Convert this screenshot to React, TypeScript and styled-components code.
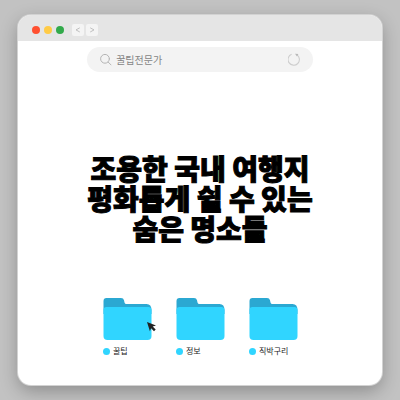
import React from "react";
import styled, { createGlobalStyle } from "styled-components";

const GlobalStyle = createGlobalStyle`
  * {
    box-sizing: border-box;
  }

  body {
    margin: 0;
    background: #c2c2c2;
    font-family: "Noto Sans CJK KR", sans-serif;
  }

  button {
    padding: 0;
    border: 0;
    background: none;
    font-family: inherit;
    cursor: pointer;
  }
`;

const Page = styled.div`
  display: flex;
  min-height: 100vh;
  padding: 15px 18px;
`;

const Window = styled.main`
  display: flex;
  flex: 1;
  flex-direction: column;
  min-width: 0;
  border-radius: 13px;
  background: #fff;
  box-shadow: 0 0 0 1px #d2d2d2, 0 6px 18px rgba(0, 0, 0, 0.28);
`;

const TitleBar = styled.header`
  display: flex;
  align-items: center;
  height: 26px;
  padding: 4px 14px 0;
  border-radius: 13px 13px 0 0;
  background: #e5e5e5;
`;

const Lights = styled.div`
  display: flex;
  gap: 4px;
  margin-right: 8px;
`;

const Light = styled.button<{ $color: string }>`
  width: 8px;
  height: 8px;
  border-radius: 50%;
  && {
    background: ${({ $color }) => $color};
  }
`;

const Navigation = styled.nav`
  display: flex;
  gap: 2px;
`;

const NavButton = styled.button`
  display: grid;
  place-items: center;
  width: 12px;
  height: 12px;
  border-radius: 2px;
  && {
    background: #f4f4f4;
  }
`;

const SearchBar = styled.form`
  display: flex;
  align-items: center;
  align-self: center;
  gap: 4px;
  width: 62%;
  height: 25px;
  margin-top: 6px;
  padding: 0 12px;
  border-radius: 13px;
  background: #f3f3f3;
`;

const SearchInput = styled.input`
  flex: 1;
  min-width: 0;
  height: 16px;
  padding: 0;
  border: 0;
  outline: 0;
  background: transparent;
  color: #858585;
  font-family: inherit;
  font-size: 10px;
  line-height: 16px;
`;

const ReloadButton = styled.button`
  display: flex;
`;

const Title = styled.h1`
  margin: auto 0;
  padding-top: 26px;
  color: #000;
  font-size: 28px;
  font-weight: 900;
  line-height: 30px;
  text-align: center;
  white-space: pre-line;
  -webkit-text-stroke: 1px #000;
`;

const FolderList = styled.section`
  display: flex;
  justify-content: center;
  gap: 24px;
  padding: 0 0 27px 1px;
`;

const FolderButton = styled.button`
  position: relative;
  display: flex;
  flex-direction: column;
  gap: 4px;
  width: 49px;
`;

const FolderLabel = styled.span`
  display: flex;
  align-items: center;
  gap: 3px;
  color: #222;
  font-size: 8px;
  font-weight: 400;
  line-height: 14px;
  white-space: nowrap;
`;

const Dot = styled.span`
  width: 7px;
  height: 7px;
  border-radius: 50%;
  background: #30d5ff;
`;

const Pointer = styled.svg`
  position: absolute;
  top: 23px;
  left: 43px;
`;

const lights = [
  { name: "닫기", color: "#ff5030" },
  { name: "최소화", color: "#ffcb46" },
  { name: "최대화", color: "#32aa4b" },
];

const title = "조용한 국내 여행지\n평화롭게 쉴 수 있는\n숨은 명소들";

const folders = ["꿀팁", "정보", "직박구리"];

function Chevron({ points }: { points: string }) {
  return (
    <svg width="12" height="12" viewBox="0 0 12 12" aria-hidden="true">
      <polyline points={points} fill="none" stroke="#b3b3b3" strokeWidth="0.8" />
    </svg>
  );
}

function SearchIcon() {
  return (
    <svg width="13" height="13" viewBox="0 0 13 13" fill="none" stroke="#b5b5b5" strokeLinecap="round" aria-hidden="true">
      <circle cx="6" cy="5.8" r="4.4" />
      <path d="M9.3 9.2 12 11.9" />
    </svg>
  );
}

function ReloadIcon() {
  return (
    <svg width="13" height="13" viewBox="0 0 13 13" fill="none" aria-hidden="true">
      <path d="M3.6 1.2A5.7 5.7 0 1 0 8.8 1.7" stroke="#cecece" strokeWidth="1.1" />
      <path d="M7 .8 10.4.9 9 3.6Z" fill="#b8b8b8" />
    </svg>
  );
}

function FolderIcon() {
  return (
    <svg width="49" height="42" viewBox="0 0 49 42" aria-hidden="true">
      <path d="M0.5 14V3Q0.5 0 3.5 0H18Q20.5 0 21 2.2L21.5 4.5Q21.8 6 23.5 6H43.5Q48.5 6 48.5 12V16H0.5Z" fill="#2ba8d2" />
      <path d="M0.5 12Q0.5 9 3.5 9H45.5Q48.5 9 48.5 12V38Q48.5 42 44.5 42H4.5Q0.5 42 0.5 38Z" fill="#30d5ff" />
    </svg>
  );
}

export default function App() {
  return (
    <>
      <GlobalStyle />
      <Page>
        <Window>
          <TitleBar>
            <Lights>
              {lights.map((light) => (
                <Light key={light.name} type="button" aria-label={light.name} $color={light.color} />
              ))}
            </Lights>
            <Navigation>
              <NavButton type="button" aria-label="뒤로">
                <Chevron points="7.8,3.8 4,5.9 7.8,8" />
              </NavButton>
              <NavButton type="button" aria-label="앞으로">
                <Chevron points="4.2,3.8 8,5.9 4.2,8" />
              </NavButton>
            </Navigation>
          </TitleBar>
          <SearchBar role="search" onSubmit={(event) => event.preventDefault()}>
            <SearchIcon />
            <SearchInput type="text" aria-label="검색" defaultValue="꿀팁전문가" />
            <ReloadButton type="button" aria-label="새로고침">
              <ReloadIcon />
            </ReloadButton>
          </SearchBar>
          <Title>{title}</Title>
          <FolderList>
            {folders.map((name, index) => (
              <FolderButton key={name} type="button">
                <FolderIcon />
                <FolderLabel>
                  <Dot />
                  {name}
                </FolderLabel>
                {index === 0 && (
                  <Pointer width="12" height="12" viewBox="0 0 12 12" aria-hidden="true">
                    <path d="M1 1 10 4.6 6.7 5.6 9.7 8.6 8 10.2 5.1 7.2 3.9 10.2Z" fill="#222" />
                  </Pointer>
                )}
              </FolderButton>
            ))}
          </FolderList>
        </Window>
      </Page>
    </>
  );
}
